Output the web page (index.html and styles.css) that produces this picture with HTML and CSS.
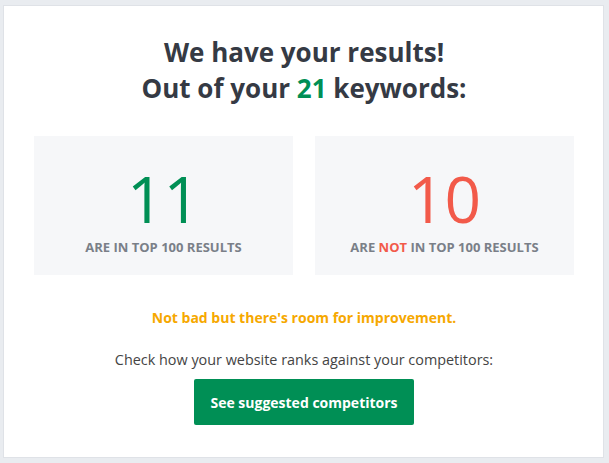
FILE: index.html
```html
<!DOCTYPE html>
<html lang="en">
<head>
  <meta charset="utf-8">
  <meta name="viewport" content="width=device-width, initial-scale=1">
  <title>Keyword results</title>
  <link rel="stylesheet" href="styles.css">
</head>
<body>

  <main class="card">
    <h1 class="title">
      We have your results!<br>
      Out of your <span class="good">21</span> keywords:
    </h1>

    <div class="stats">
      <div class="stat">
        <p class="stat-num good">11</p>
        <p class="stat-label">Are in top 100 results</p>
      </div>
      <div class="stat">
        <p class="stat-num bad">10</p>
        <p class="stat-label">Are <span class="bad">not</span> in top 100 results</p>
      </div>
    </div>

    <p class="verdict">Not bad but there's room for improvement.</p>
    <p class="hint">Check how your website ranks against your competitors:</p>
    <button class="cta">See suggested competitors</button>
  </main>

</body>
</html>
```

FILE: styles.css
```css
* {
  margin: 0;
  padding: 0;
  box-sizing: border-box;
}

:root {
  --page: #e9ecf0;
  --ink: #353a44;
  --muted: #7a7f88;
  --green: #008f55;
  --red: #f25a4a;
  --orange: #f6a800;
  --box: #f6f7f9;
}

html {
  font-family: "Open Sans", sans-serif;
  font-size: 14px;
}

body {
  background: var(--page);
  padding: 5px 5px 5px 3px;
  height: 100vh;
}

.card {
  height: 100%;
  background: #fff;
  border: 1px solid #dfe2e7;
  padding: 28px 29px 0 30px;
  display: flex;
  flex-direction: column;
  align-items: center;
  text-align: center;
  color: var(--ink);
}

.title {
  font-size: 26px;
  line-height: 36px;
  font-weight: 700;
  color: var(--ink);
}

.good { color: var(--green); }
.bad { color: var(--red); }

.stats {
  display: grid;
  grid-template-columns: 1fr 1fr;
  gap: 22px;
  width: 100%;
  margin-top: 30px;
}

.stat {
  background: var(--box);
  height: 139px;
  padding-top: 31px;
}

.stat-num {
  font-size: 64px;
  line-height: 64px;
  font-weight: 400;
}

.stat-label {
  margin-top: 7px;
  font-size: 13px;
  line-height: 18px;
  font-weight: 700;
  text-transform: uppercase;
  color: var(--muted);
}

.verdict {
  margin-top: 33px;
  font-weight: 700;
  color: var(--orange);
}

.hint {
  margin-top: 23px;
  font-size: 14.4px;
  color: #444;
}

.cta {
  margin-top: 10px;
  height: 46px;
  padding: 0 16px;
  background: var(--green);
  color: #fff;
  font: inherit;
  font-weight: 700;
  border: 0;
  border-radius: 2px;
  cursor: pointer;
}
```
